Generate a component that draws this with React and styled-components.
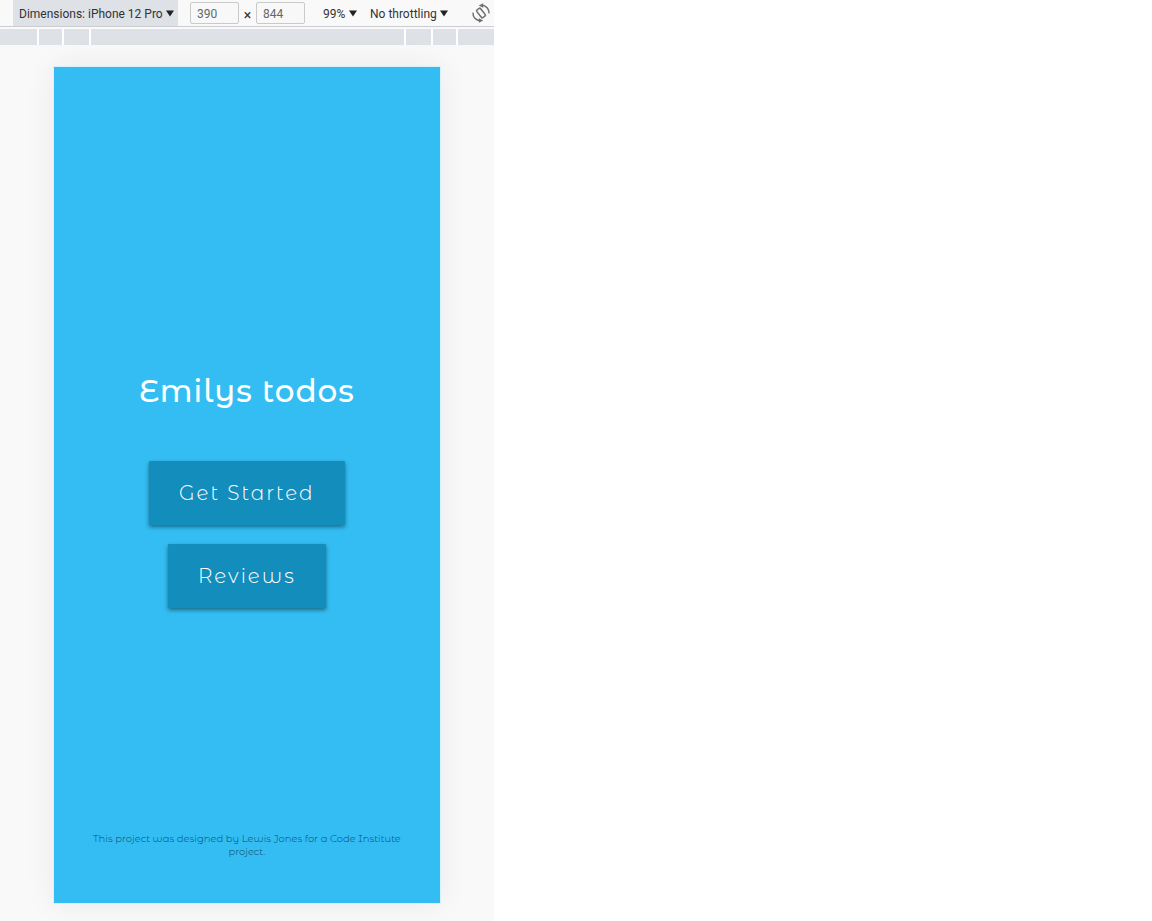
import React from "react";
import styled, { createGlobalStyle } from "styled-components";

const GlobalStyle = createGlobalStyle`
  *, *::before, *::after { box-sizing: border-box; }
  body { margin: 0; background: #fff; }
`;

const displayFont = `"Montserrat Alternates", Lato, "Open Sans", sans-serif`;

const Split = styled.div`
  display: grid;
  grid-template-columns: minmax(0, 3fr) minmax(0, 4fr);
  min-height: 100vh;
`;

const Pane = styled.section`
  display: flex;
  flex-direction: column;
  background: #f9f9f9;
  overflow: hidden;
`;

const Toolbar = styled.div`
  display: flex;
  align-items: center;
  height: 27px;
  padding-left: 13px;
  border-bottom: 1px solid #cbcdd1;
  font: 12px/16px Roboto, "Noto Sans", sans-serif;
  color: #333;
  white-space: nowrap;
`;

const Picker = styled.label`
  display: flex;
  flex: none;
  align-items: center;
  gap: 3px;
  height: 26px;
  padding: ${(p) => (p.$active ? "0 4px 0 6px" : "0")};
  margin-left: ${(p) => p.$space || "0"};
  background: ${(p) => (p.$active ? "#dee1e6" : "transparent")};
`;

const Select = styled.select`
  appearance: none;
  flex: none;
  padding: 2px 0 0;
  border: 0;
  background: transparent;
  color: inherit;
  font: inherit;
`;

const Sizes = styled.div`
  display: flex;
  align-items: center;
  margin-left: 12px;
`;

const Size = styled.input`
  width: 49px;
  height: 22px;
  padding: 2px 6px 0;
  border: 1px solid #cacaca;
  border-radius: 2px;
  background: #f8f8f8;
  color: #666;
  font: inherit;
`;

const Times = styled.span`
  width: 17px;
  padding-top: 4px;
  font-size: 14px;
  text-align: center;
`;

const IconButton = styled.button`
  display: flex;
  flex: none;
  margin: 0 3px 0 auto;
  padding: 0;
  border: 0;
  background: transparent;
  color: #6e6e6e;
`;

const Ruler = styled.div`
  display: grid;
  grid-template-columns: 37px 23px 25px 1fr 25px 23px 36px;
  gap: 2px;
  height: 16px;
  margin-top: 2px;
  background: #fff;
`;

const Segment = styled.span`
  background: #dee1e6;
`;

const Stage = styled.div`
  padding: 22px 54px 18px;
`;

const Device = styled.main`
  display: flex;
  flex-direction: column;
  align-items: center;
  aspect-ratio: 6 / 13;
  padding: 0 30px 45px;
  background: #33bdf2;
  box-shadow: 0 0 0 1px #d9f1fa, 0 0 30px rgba(0, 0, 0, 0.07);
  font-family: ${displayFont};
  text-align: center;
`;

const Hero = styled.div`
  display: flex;
  flex: 1;
  flex-direction: column;
  align-items: center;
  justify-content: center;
  gap: 19px;
  padding-top: 79px;
`;

const Title = styled.h1`
  margin: 0 0 30px;
  color: #fff;
  font-size: 31px;
  font-weight: 500;
  line-height: 42px;
  letter-spacing: 1px;
`;

const Action = styled.button`
  height: 64px;
  padding: 0 30px;
  border: 0;
  border-radius: 1px;
  background: #138dbb;
  box-shadow: 0 2px 4px rgba(0, 0, 0, 0.45);
  color: #fff;
  font: 300 20px/26px ${displayFont};
  letter-spacing: 2px;
`;

const Credit = styled.footer`
  color: #0c4d6c;
  font-size: 10px;
  font-weight: 300;
  line-height: 13px;
`;

const Arrow = () => (
  <svg width="8" height="7" viewBox="0 0 8 7" aria-hidden="true">
    <path d="M0 0.5h8L4 6.5z" fill="#222" />
  </svg>
);

const RotateIcon = () => (
  <svg width="20" height="20" viewBox="0 0 20 20" fill="none" stroke="currentColor" strokeWidth="1.5" aria-hidden="true">
    <rect x="7.6" y="5.2" width="4.8" height="9.6" rx="1.2" transform="rotate(-38 10 10)" />
    <path d="M10.5 2.3C15.3 2.4 18.2 5.8 18 10.4M9.5 17.7C4.7 17.6 1.8 14.2 2 9.6" />
    <path d="M7.8 2.4 12.2 0.2v4.6zM12.2 17.6 7.8 19.8v-4.6z" fill="currentColor" stroke="none" />
  </svg>
);

const Dropdown = ({ label, value, ...rest }) => (
  <Picker {...rest}>
    <Select aria-label={label}>
      <option>{value}</option>
    </Select>
    <Arrow />
  </Picker>
);

export default function App() {
  return (
    <>
      <GlobalStyle />
      <Split>
        <Pane>
          <Toolbar>
            <Dropdown label="Device" value="Dimensions: iPhone 12 Pro" $active />
            <Sizes>
              <Size aria-label="Width" defaultValue="390" />
              <Times>×</Times>
              <Size aria-label="Height" defaultValue="844" />
            </Sizes>
            <Dropdown label="Zoom" value="99%" $space="18px" />
            <Dropdown label="Throttling" value="No throttling" $space="13px" />
            <IconButton type="button" aria-label="Rotate">
              <RotateIcon />
            </IconButton>
          </Toolbar>
          <Ruler>
            {[0, 1, 2, 3, 4, 5, 6].map((n) => (
              <Segment key={n} />
            ))}
          </Ruler>
          <Stage>
            <Device>
              <Hero>
                <Title>Emilys todos</Title>
                <Action type="button">Get Started</Action>
                <Action type="button">Reviews</Action>
              </Hero>
              <Credit>This project was designed by Lewis Jones for a Code Institute project.</Credit>
            </Device>
          </Stage>
        </Pane>
      </Split>
    </>
  );
}
